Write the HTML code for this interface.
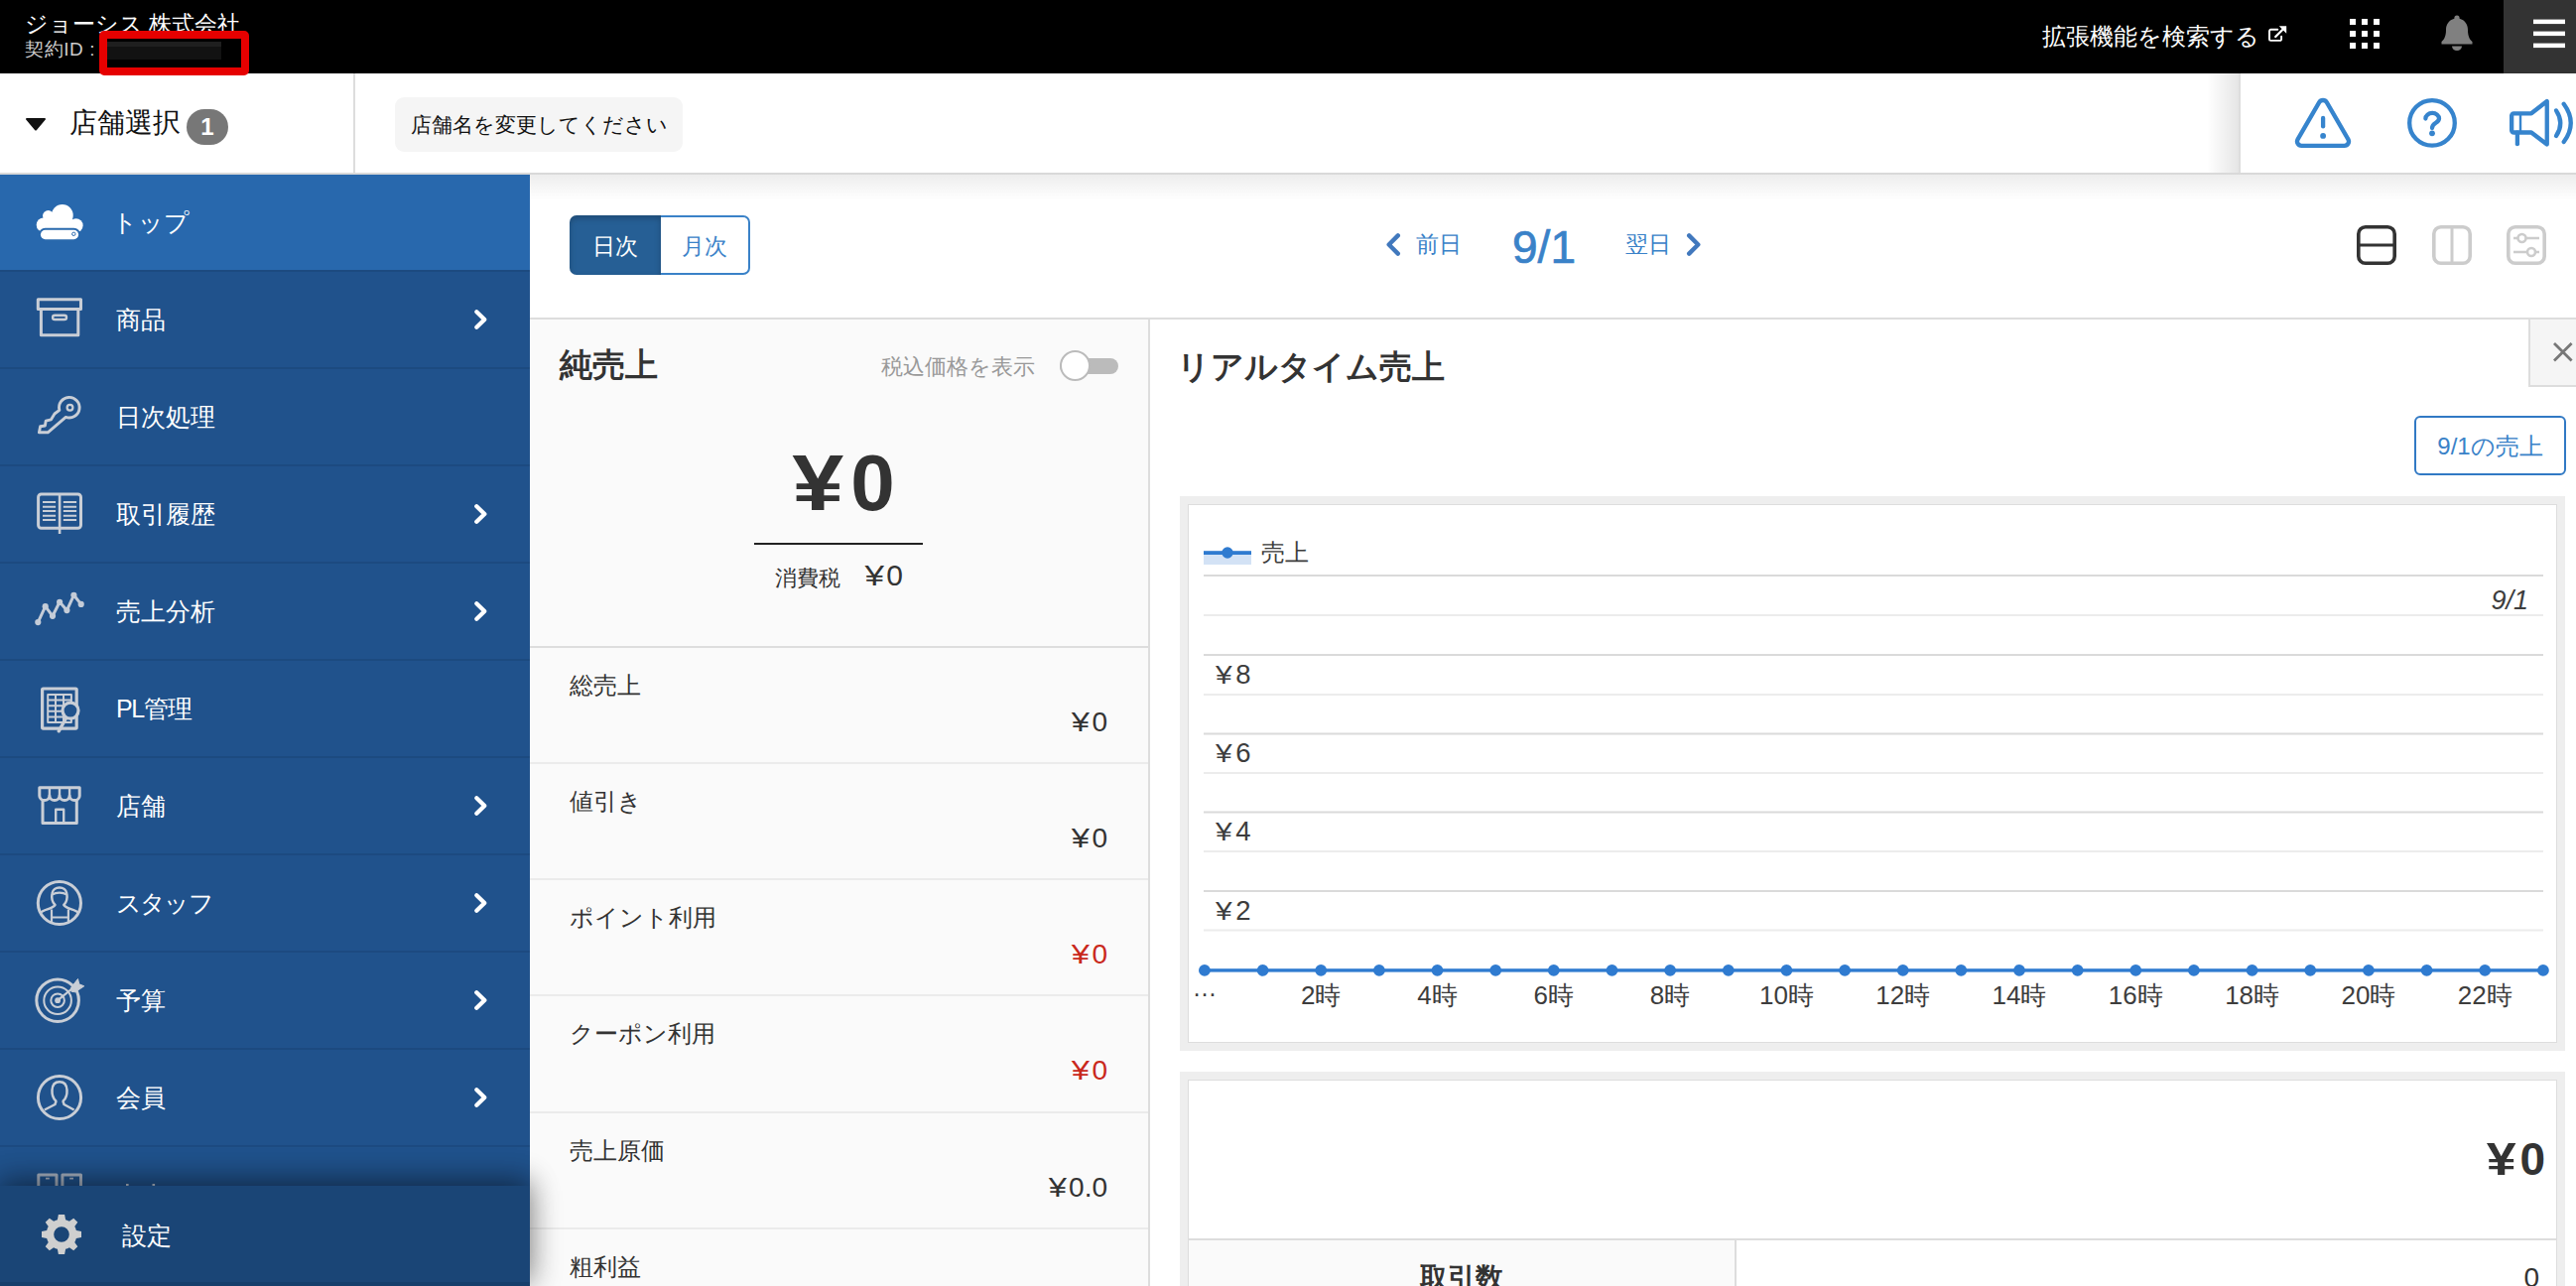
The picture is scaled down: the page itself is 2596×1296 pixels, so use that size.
<!DOCTYPE html>
<html lang="ja">
<head>
<meta charset="utf-8">
<title>トップ</title>
<style>
*{box-sizing:border-box;margin:0;padding:0}
html,body{width:2596px;height:1296px;overflow:hidden;background:#fff}
body{font-family:"Liberation Sans",sans-serif;color:#333;position:relative}
.abs{position:absolute}
svg{display:block;overflow:visible}

/* ---------- top black bar ---------- */
#topbar{position:absolute;left:0;top:0;width:2596px;height:74px;background:#000;color:#fff}
#company{position:absolute;left:25px;top:9.500px;font-size:23px;line-height:28px;white-space:nowrap}
#contract{position:absolute;left:25px;top:37.500px;font-size:19px;letter-spacing:.6px;line-height:24px;color:#ccc;white-space:nowrap}
#redact{position:absolute;left:108px;top:42px;width:115px;height:18px;background:#121212;border-top:5px solid #1f1f1f}
#redbox{position:absolute;left:100px;top:31px;width:151px;height:45px;border:8px solid #e60000;border-radius:5px;z-index:30}
#extsearch{position:absolute;left:2058px;top:22px;font-size:24px;line-height:30px;white-space:nowrap}
#hamb{position:absolute;left:2523px;top:0;width:73px;height:74px;background:#333}

/* ---------- second bar ---------- */
#bar2{position:absolute;left:0;top:74px;width:2596px;height:102px;background:#fff;border-bottom:2px solid #d9d9d9}
#bar2 .vsep{position:absolute;left:356px;top:0;width:2px;height:100px;background:#ddd}
#storesel{position:absolute;left:70px;top:32px;font-size:28px;line-height:36px;color:#111;white-space:nowrap}
#badge{position:absolute;left:188px;top:36px;width:42px;height:36px;border-radius:18px;background:#777;color:#fff;font-weight:bold;font-size:24px;line-height:36px;text-align:center}
#chip{position:absolute;left:398px;top:24px;width:290px;height:55px;border-radius:9px;background:#f5f5f5;color:#111;font-size:21px;line-height:55px;text-align:center;white-space:nowrap}
#bar2r{position:absolute;left:2256px;top:0;width:338px;height:100px;background:#fff;border-left:2px solid #ddd}
#bar2shadow{position:absolute;left:2224px;top:0;width:32px;height:100px;background:linear-gradient(to right,rgba(0,0,0,0),rgba(0,0,0,.10))}

/* ---------- sidebar ---------- */
#side{position:absolute;left:0;top:176px;width:534px;height:1120px;background:#20528c;overflow:hidden}
.item{position:absolute;left:0;width:534px;height:98px;border-bottom:2px solid #1c4a80;color:#fff;font-size:25px}
.item.on{background:#2868ad;border-bottom-color:#1c4a80}
.item .lbl{position:absolute;left:117px;top:30px;line-height:36px;white-space:nowrap}
.item .ico{position:absolute;left:34px;top:22px;width:52px;height:52px}
.item .chev{position:absolute;left:477.500px;top:38px;width:13px;height:20px}
#settings{position:absolute;left:0;top:1195px;width:534px;height:101px;background:#1a4576;box-shadow:0 0 30px rgba(0,0,0,.32),0 -8px 26px rgba(0,0,0,.28);color:#fff;font-size:25px;z-index:20}
#settings .lbl{position:absolute;left:123px;top:32px;line-height:36px}
#settings .strip{position:absolute;left:0;bottom:0;width:534px;height:4.500px;background:#163e6b}

/* ---------- content ---------- */
#content{position:absolute;left:534px;top:176px;width:2062px;height:1120px;background:#fff}
#topshadow{position:absolute;left:0;top:0;width:2062px;height:26px;background:linear-gradient(to bottom,rgba(0,0,0,.07),rgba(0,0,0,0))}
#toolbar{position:absolute;left:0;top:0;width:2062px;height:146px;border-bottom:2px solid #ddd}
#seg{position:absolute;left:40px;top:41px;width:182px;height:60px;font-size:23px;text-align:center}
#seg .a{position:absolute;left:0;top:0;width:92px;height:60px;background:#265f95;color:#fff;line-height:62px;border-radius:7px 0 0 7px;box-shadow:inset 0 3px 6px rgba(0,0,0,.22)}
#seg .b{position:absolute;left:92px;top:0;width:90px;height:60px;color:#3a82c8;line-height:58px;border:2px solid #3a82c8;border-left:0;border-radius:0 7px 7px 0;background:#fff}
.blue{color:#3a82c8}
#prev{position:absolute;left:892.500px;top:54px;font-size:23px;line-height:32px;white-space:nowrap}
#next{position:absolute;left:1104px;top:54px;font-size:23px;line-height:32px;white-space:nowrap}
#date{position:absolute;left:962px;top:46.500px;width:120px;text-align:center;font-size:46px;line-height:52px;-webkit-text-stroke:.7px #3a82c8}

/* middle panel */
#mid{position:absolute;left:0;top:146px;width:625px;height:974px;background:#fafafa;border-right:2px solid #ddd}
#mid h2{position:absolute;left:30px;top:24px;font-size:33px;line-height:44px;color:#333}
#taxlbl{position:absolute;left:354px;top:33px;font-size:22px;line-height:30px;color:#999;white-space:nowrap}
#toggle{position:absolute;left:534px;top:39px;width:59px;height:16px;border-radius:8px;background:#bbb}
#toggle i{position:absolute;left:0;top:-8px;width:31px;height:31px;border-radius:50%;background:#fff;border:2px solid #bbb}
#big{position:absolute;left:5px;top:120px;width:623px;text-align:center;font-size:80px;line-height:90px;font-weight:bold;color:#333}
#uline{position:absolute;left:226px;top:224.500px;width:170px;height:2.500px;background:#222}
#tax{position:absolute;left:247px;top:245px;font-size:22px;line-height:32px;color:#333;white-space:nowrap}
#taxv{position:absolute;left:337.500px;top:240px;font-size:30px;line-height:36px;color:#333;white-space:nowrap}
.row{position:absolute;left:0;width:623px;height:117px;border-top:2px solid #ebebeb}
.row.first{border-top-color:#ddd}
.row .k{position:absolute;left:40px;top:22px;font-size:24px;line-height:32px;white-space:nowrap}
.row .v{position:absolute;right:41px;top:57px;font-size:28px;line-height:36px;white-space:nowrap}
.red{color:#c9281c}
.yen{display:inline-block;transform:scaleX(1.17);margin:0 .13em 0 .04em}

/* right panel */
#right{position:absolute;left:625px;top:146px;width:1437px;height:974px;background:#fff}
#right h2{position:absolute;left:27px;top:26px;font-size:32.500px;line-height:44px;color:#333}
#closetab{position:absolute;left:1389px;top:0;width:48px;height:68px;background:#f5f5f5;border-left:2px solid #ddd;border-bottom:2px solid #ddd}
#salesbtn{position:absolute;left:1274px;top:97px;width:153px;height:60px;border:2px solid #3179c4;border-radius:6px;color:#3a82c8;font-size:24px;line-height:57px;text-align:center;white-space:nowrap}
.frame{position:absolute;left:30px;width:1396px;border:8px solid #eee;background:#fff}
.frame>.in{position:absolute;left:0;top:0;right:0;bottom:0;border:1px solid #ddd}

#sumtotal{position:absolute;right:12px;top:54px;font-size:46px;line-height:52px;font-weight:bold;color:#333}
#sumrow{position:absolute;left:1px;right:1px;top:159.500px;height:240px;border-top:2px solid #ddd}
#sumrow .l{position:absolute;left:0;top:0;width:552px;height:240px;background:#fafafa;border-right:2px solid #ddd;text-align:center;font-weight:bold;font-size:28px;line-height:36px;padding-top:20px;color:#333}
#sumrow .r{position:absolute;right:17px;top:20px;font-size:28px;line-height:36px;color:#333}
</style>
</head>
<body>

<!-- ================= TOP BAR ================= -->
<div id="topbar">
  <div id="company">ジョーシス 株式会社</div>
  <div id="contract">契約ID :</div>
  <div id="redact"></div>
  <div id="redbox"></div>
  <div id="extsearch">拡張機能を検索する</div>
  <svg class="abs" style="left:2284px;top:24px" width="22" height="20" viewBox="0 0 22 20"><g fill="none" stroke="#fff" stroke-width="1.900" stroke-linejoin="round" stroke-linecap="round"><path d="M11.300 5.800 H4.500 a1.500 1.500 0 0 0 -1.500 1.500 V15.400 a1.500 1.500 0 0 0 1.500 1.500 H13.600 a1.500 1.500 0 0 0 1.500 -1.500 V12.700"/><path d="M9.200 13 L17 5.200" stroke-width="2.300"/></g><path d="M12.800 2.300 H20.200 V9.700 Z" fill="#fff"/></svg>
  <svg class="abs" style="left:2368px;top:19px" width="30" height="30" viewBox="0 0 30 30"><g fill="#fff"><rect x="0" y="0" width="6" height="6"/><rect x="12" y="0" width="6" height="6"/><rect x="24" y="0" width="6" height="6"/><rect x="0" y="12" width="6" height="6"/><rect x="12" y="12" width="6" height="6"/><rect x="24" y="12" width="6" height="6"/><rect x="0" y="24" width="6" height="6"/><rect x="12" y="24" width="6" height="6"/><rect x="24" y="24" width="6" height="6"/></g></svg>
  <svg class="abs" style="left:2460px;top:15px" width="32" height="36" viewBox="0 0 32 36"><g fill="#808080"><path d="M16 0.500 a2.600 2.600 0 0 1 2.600 2.600 v0.700 C24 5.200 27 9.800 27 15 c0 6 1.500 9.500 4.500 12 v2.500 H0.500 V27 C3.500 24.500 5 21 5 15 C5 9.800 8 5.200 13.400 3.800 v-0.700 A2.600 2.600 0 0 1 16 0.500 Z"/><path d="M11 31.500 H21 a5 4.500 0 0 1 -10 0 Z"/></g></svg>
  <div id="hamb"><svg class="abs" style="left:30px;top:19px" width="32" height="30" viewBox="0 0 32 30"><g fill="#fff"><rect x="0" y="0.600" width="32" height="4.500"/><rect x="0" y="12.600" width="32" height="4.500"/><rect x="0" y="24.600" width="32" height="4.500"/></g></svg></div>
</div>

<!-- ================= SECOND BAR ================= -->
<div id="bar2">
  <div class="vsep"></div>
  <svg class="abs" style="left:25px;top:44px" width="22" height="14" viewBox="0 0 22 14"><path d="M2 1 H20 a1 1 0 0 1 .8 1.600 L12 13 a1.300 1.300 0 0 1 -2 0 L1.200 2.600 A1 1 0 0 1 2 1 Z" fill="#111"/></svg>
  <div id="storesel">店舗選択</div>
  <div id="badge">1</div>
  <div id="chip">店舗名を変更してください</div>
  <div id="bar2shadow"></div>
  <div id="bar2r">
    <svg class="abs" style="left:52px;top:22px" width="62" height="56" viewBox="0 0 62 56"><g fill="none" stroke="#3684cd" stroke-width="4.300" stroke-linejoin="round" stroke-linecap="round"><path d="M27.200 7.200 a4.400 4.400 0 0 1 7.600 0 L56.400 44.300 a4.400 4.400 0 0 1 -3.800 6.600 H9.400 a4.400 4.400 0 0 1 -3.800 -6.600 Z"/><path d="M31.100 22.900 V31.400"/></g><circle cx="31.100" cy="40.900" r="2.900" fill="#3684cd"/></svg>
    <svg class="abs" style="left:166px;top:23px" width="54" height="54" viewBox="0 0 54 54"><circle cx="27" cy="26.900" r="22.800" fill="none" stroke="#3684cd" stroke-width="4.300"/><path d="M20.400 22.500 A6.800 5.600 0 0 1 34 22.500 C34 27 27 26.500 27 32" fill="none" stroke="#3684cd" stroke-width="4.300" stroke-linecap="round"/><circle cx="27" cy="37.300" r="2.900" fill="#3684cd"/></svg>
    <svg class="abs" style="left:268px;top:22px" width="70" height="56" viewBox="0 0 70 56"><g fill="none" stroke="#3684cd" stroke-width="4.300" stroke-linejoin="round" stroke-linecap="round"><path d="M5.150 20.500 a2.200 2.200 0 0 1 2.200 -2.200 H25 L40.750 6 V49.500 L25 37.500 H7.350 a2.200 2.200 0 0 1 -2.200 -2.200 Z"/><path d="M14 18.300 V37.500" stroke-width="2.400"/><path d="M10.900 37.600 V49.200"/><path d="M50 15.400 Q58.600 28.200 50 41"/><path d="M57.700 8.800 Q71.800 27.900 57.700 47"/></g></svg>
  </div>
</div>

<!-- ================= SIDEBAR ================= -->
<div id="side">
<!--SIDE-START-->
  <svg width="0" height="0" style="position:absolute"><defs>
    <path id="chv" d="M2.300 2.300 L10.300 10 L2.300 17.700" fill="none" stroke="#fff" stroke-width="4.300" stroke-linecap="round" stroke-linejoin="round"/>
  </defs></svg>
  <div class="item on" style="top:0px">
    <svg class="ico" viewBox="0 0 52 52"><g fill="#fff">
      <circle cx="28.800" cy="18.900" r="10.900"/><circle cx="14.600" cy="19.600" r="5.600"/><circle cx="9.900" cy="28.700" r="7.200"/><circle cx="42.600" cy="29.200" r="7"/>
      <rect x="9.900" y="24" width="32.700" height="12"/><rect x="14" y="19" width="25" height="10"/>
      <rect x="4.900" y="31.800" width="42.200" height="13.400" rx="6.700" fill="#2868ad"/>
      <rect x="6.900" y="33.800" width="38.200" height="9.400" rx="4.700"/>
      <circle cx="40.300" cy="37.800" r="1.700" fill="none" stroke="#2868ad" stroke-width="1"/>
    </g></svg>
    <div class="lbl" style="left:112.500px">トップ</div>
  </div>
  <div class="item" style="top:98px">
    <svg class="ico" viewBox="0 0 52 52"><g fill="none" stroke="#c9ced6" stroke-width="3" stroke-linejoin="round">
      <rect x="4.300" y="5.800" width="43.200" height="9.600"/>
      <path d="M7.400 15.400 V41.700 H44.800 V15.400"/>
      <rect x="19.100" y="21.800" width="13.900" height="4.200" rx="2.100" stroke-width="2.400"/>
    </g></svg>
    <div class="lbl">商品</div>
    <svg class="chev" viewBox="0 0 13 20"><use href="#chv"/></svg>
  </div>
  <div class="item" style="top:196px">
    <svg class="ico" viewBox="0 0 52 52"><g fill="none" stroke="#c9ced6" stroke-width="2.900" stroke-linejoin="round">
      <path d="M25.850 19.400 L21 23 L17.500 28.800 L12.200 30.200 L11.400 35 L6.600 35.800 L5.400 41.800 L14.200 41.800 L32.300 26.400 A10.300 10.300 0 1 0 25.850 19.400 Z"/>
      <circle cx="36.500" cy="16.700" r="2.900" stroke-width="2.200"/>
    </g></svg>
    <div class="lbl">日次処理</div>
  </div>
  <div class="item" style="top:294px">
    <svg class="ico" viewBox="0 0 52 52"><g fill="none" stroke="#c9ced6" stroke-width="3" stroke-linejoin="round">
      <rect x="4.600" y="5.900" width="42.900" height="34.400" rx="3"/>
      <path d="M26.100 5.900 V46" stroke-width="2.600"/>
      <path d="M9 14.1H22.100M29.800 14.1H43.100M9 18.7H22.100M29.800 18.7H43.100M9 23.1H22.100M29.800 23.1H43.100M9 27.8H22.100M29.800 27.8H43.100M9 32.1H22.100M29.800 32.1H43.100" stroke-width="2"/>
    </g></svg>
    <div class="lbl">取引履歴</div>
    <svg class="chev" viewBox="0 0 13 20"><use href="#chv"/></svg>
  </div>
  <div class="item" style="top:392px">
    <svg class="ico" viewBox="0 0 52 52"><g fill="none" stroke="#c4ccd8" stroke-width="3" stroke-linejoin="round" stroke-linecap="round">
      <path d="M4.3 37.1 L11.7 21.2 L19 30.8 L26.1 16.8 L33.4 25.1 L40.4 9.8 L47.7 18.9"/><g fill="#c4ccd8" stroke="none"><circle cx="4.3" cy="37.1" r="3.100"/><circle cx="11.7" cy="21.2" r="3.100"/><circle cx="19" cy="30.8" r="3.100"/><circle cx="26.1" cy="16.8" r="3.100"/><circle cx="33.4" cy="25.1" r="3.100"/><circle cx="40.4" cy="9.8" r="3.100"/><circle cx="47.7" cy="18.9" r="3.100"/></g>
    </g></svg>
    <div class="lbl">売上分析</div>
    <svg class="chev" viewBox="0 0 13 20"><use href="#chv"/></svg>
  </div>
  <div class="item" style="top:490px">
    <svg class="ico" viewBox="0 0 52 52"><g fill="none" stroke="#c9ced6" stroke-width="3.200" stroke-linejoin="round">
      <rect x="8.600" y="6" width="34.600" height="40.100" rx="1"/>
      <g stroke-width="2"><rect x="14.200" y="12" width="23.700" height="28"/><path d="M14.200 17.600H38M14.200 23.200H38M14.200 28.800H38M14.200 34.400H38M22 12V40M30 12V40"/></g>
      <circle cx="37" cy="28.100" r="8" fill="#20528c"/>
      <path d="M32.200 36.500 L25.200 48.800" stroke-linecap="round" stroke-width="3.400"/>
    </g></svg>
    <div class="lbl" style="letter-spacing:-1.300px">PL管理</div>
  </div>
  <div class="item" style="top:588px">
    <svg class="ico" viewBox="0 0 52 52"><g fill="none" stroke="#c9ced6" stroke-width="3" stroke-linejoin="round">
      <path d="M5.800 7.800 H46.200 V16 A5.050 4.600 0 0 1 36.100 16 A5.050 4.600 0 0 1 26 16 A5.050 4.600 0 0 1 15.900 16 A5.050 4.600 0 0 1 5.800 16 Z"/>
      <path d="M15.900 7.800V16M26 7.800V16M36.100 7.800V16" stroke-width="2.400"/>
      <path d="M9 20.500 V43.600 H43.300 V20.500"/>
      <path d="M22.200 43 V29.700 H30.200 V43" stroke-width="2.400"/>
    </g></svg>
    <div class="lbl">店舗</div>
    <svg class="chev" viewBox="0 0 13 20"><use href="#chv"/></svg>
  </div>
  <div class="item" style="top:686px">
    <svg class="ico" viewBox="0 0 52 52"><g fill="none" stroke="#c9ced6" stroke-width="3" stroke-linejoin="round">
      <circle cx="25.900" cy="26" r="21.600"/>
      <path d="M6.500 36 C10 32 18.500 32.500 21.500 28 C19 25.500 17.500 22 18.500 16.500 C19.500 8.500 32.300 8.500 33.300 16.500 C34.300 22 32.800 25.500 30.300 28 C33.300 32.500 41.800 32 45.300 36" stroke-width="2.500"/>
      <path d="M19 17.500 C22 15 29.800 15 32.800 17.500" stroke-width="2.200"/>
      <path d="M18 32.500 V45 M34.900 32.500 V45 M18 40.500 H34.900" stroke-width="2.200"/>
    </g></svg>
    <div class="lbl" style="letter-spacing:-1.800px">スタッフ</div>
    <svg class="chev" viewBox="0 0 13 20"><use href="#chv"/></svg>
  </div>
  <div class="item" style="top:784px">
    <svg class="ico" viewBox="0 0 52 52"><g fill="none" stroke="#c9ced6" stroke-width="3" stroke-linecap="round">
      <circle cx="24.100" cy="26.200" r="21.300"/>
      <circle cx="24.100" cy="26.200" r="13.800" stroke-width="2"/>
      <circle cx="24.100" cy="26.200" r="6.800" stroke-width="2"/>
      <circle cx="24.100" cy="26.200" r="2.900" fill="#c9ced6" stroke="none"/>
      <path d="M24.100 26.200 L41 12.500" stroke-width="2.200"/>
      <path d="M37.500 13.500 L44.500 4.500 L45.800 9.800 L50.800 11.800 L41.800 17.800 L38.300 17.300 Z" fill="#c9ced6" stroke="#c9ced6" stroke-width="1" stroke-linejoin="round"/>
    </g></svg>
    <div class="lbl">予算</div>
    <svg class="chev" viewBox="0 0 13 20"><use href="#chv"/></svg>
  </div>
  <div class="item" style="top:882px">
    <svg class="ico" viewBox="0 0 52 52"><g fill="none" stroke="#c9ced6" stroke-width="3" stroke-linejoin="round">
      <circle cx="26" cy="26" r="21.600"/>
      <path d="M10.800 38.500 L21.500 33 C21.500 31.500 22.800 31 22.300 29.500 C19.500 27 18.300 22 18.500 18.500 C18.800 13 21.500 10.200 26 10.200 C30.500 10.200 33.200 13 33.500 18.500 C33.700 22 32.500 27 29.700 29.500 C29.200 31 30.500 31.500 30.500 33 L40.600 38.500" stroke-width="2.500"/>
    </g></svg>
    <div class="lbl">会員</div>
    <svg class="chev" viewBox="0 0 13 20"><use href="#chv"/></svg>
  </div>
  <div class="item" style="top:980px;border-bottom:0">
    <svg class="ico" viewBox="0 0 52 52"><g fill="none" stroke="#a9b3c3" stroke-width="3" stroke-linejoin="round">
      <rect x="4.800" y="6.100" width="18.200" height="30"/><rect x="28.900" y="6.100" width="18.600" height="30"/>
      <path d="M12 9.600H15.800M36.200 9.600H40" stroke-width="1.600"/>
    </g></svg>
    <svg class="abs" style="left:120px;top:34px" width="50" height="6" viewBox="0 0 50 6"><g fill="#b9c2d0"><rect x="7" y="3" width="2.600" height="3"/><rect x="33.500" y="3" width="2.600" height="3"/></g></svg>
  </div>
<!--SIDE-END-->
</div>
<div id="settings">
  <svg class="abs" style="left:42px;top:29px" width="40" height="40" viewBox="0 0 41 41"><path fill="#cfcfcf" fill-rule="evenodd" d="M17.300 0 H23.700 L24.700 5.300 A15.800 15.800 0 0 1 28.600 6.900 L33 3.800 L37.200 8 L34.100 12.400 A15.800 15.800 0 0 1 35.700 16.300 L41 17.300 V23.700 L35.700 24.700 A15.800 15.800 0 0 1 34.100 28.600 L37.200 33 L33 37.200 L28.600 34.100 A15.800 15.800 0 0 1 24.700 35.700 L23.700 41 H17.300 L16.300 35.700 A15.800 15.800 0 0 1 12.400 34.100 L8 37.200 L3.800 33 L6.900 28.600 A15.800 15.800 0 0 1 5.300 24.700 L0 23.700 V17.300 L5.300 16.300 A15.800 15.800 0 0 1 6.900 12.400 L3.800 8 L8 3.800 L12.400 6.900 A15.800 15.800 0 0 1 16.300 5.300 Z M20.500 12.500 A8 8 0 1 0 20.500 28.500 A8 8 0 1 0 20.500 12.500 Z"/></svg>
  <div class="lbl">設定</div>
  <div class="strip"></div>
</div>

<!-- ================= CONTENT ================= -->
<div id="content">
  <div id="toolbar">
    <div id="seg"><div class="a">日次</div><div class="b">月次</div></div>
    <svg class="abs" style="left:862px;top:59px" width="16" height="23" viewBox="0 0 16 24"><path d="M13 2.500 L3.500 12 L13 21.500" fill="none" stroke="#4178bd" stroke-width="4.600" stroke-linecap="round" stroke-linejoin="round"/></svg>
    <div id="prev" class="blue">前日</div>
    <div id="date" class="blue">9/1</div>
    <div id="next" class="blue">翌日</div>
    <svg class="abs" style="left:1165px;top:59px" width="16" height="23" viewBox="0 0 16 24"><path d="M3 2.500 L12.500 12 L3 21.500" fill="none" stroke="#4178bd" stroke-width="4.600" stroke-linecap="round" stroke-linejoin="round"/></svg>
    <svg class="abs" style="left:1841px;top:51px" width="40" height="40" viewBox="0 0 40 40"><g fill="none" stroke="#333" stroke-width="3.600"><rect x="1.800" y="1.800" width="36.400" height="36.400" rx="7"/><path d="M2 20 H38" stroke-width="3"/></g></svg>
    <svg class="abs" style="left:1917px;top:51px" width="40" height="40" viewBox="0 0 40 40"><g fill="none" stroke="#ccc" stroke-width="3.600"><rect x="1.800" y="1.800" width="36.400" height="36.400" rx="7"/><path d="M20 2 V38" stroke-width="3"/></g></svg>
    <svg class="abs" style="left:1992px;top:51px" width="40" height="40" viewBox="0 0 40 40"><g fill="none" stroke="#ccc" stroke-width="3.600"><rect x="1.800" y="1.800" width="36.400" height="36.400" rx="7"/><g stroke-width="2.600"><path d="M7 13 H11.500 M19.500 13 H33"/><circle cx="15.500" cy="13" r="4"/><path d="M7 27 H21 M29 27 H33"/><circle cx="25" cy="27" r="4"/></g></g></svg>
  </div>
  <div id="topshadow"></div>

  <div id="mid">
    <h2>純売上</h2>
    <div id="taxlbl">税込価格を表示</div>
    <div id="toggle"><i></i></div>
    <div id="big"><span class="yen">¥</span>0</div>
    <div id="uline"></div>
    <div id="tax">消費税</div><div id="taxv"><span class="yen">¥</span>0</div>
    <div class="row first" style="top:329.00px"><div class="k">総売上</div><div class="v "><span class="yen">¥</span>0</div></div>
    <div class="row" style="top:446.15px"><div class="k">値引き</div><div class="v "><span class="yen">¥</span>0</div></div>
    <div class="row" style="top:563.30px"><div class="k">ポイント利用</div><div class="v red"><span class="yen">¥</span>0</div></div>
    <div class="row" style="top:680.45px"><div class="k">クーポン利用</div><div class="v red"><span class="yen">¥</span>0</div></div>
    <div class="row" style="top:797.60px"><div class="k">売上原価</div><div class="v "><span class="yen">¥</span>0.0</div></div>
    <div class="row" style="top:914.75px"><div class="k">粗利益</div><div class="v "><span class="yen">¥</span>0</div></div>
  </div>

  <div id="right">
    <h2>リアルタイム売上</h2>
    <div id="closetab"><svg class="abs" style="left:23.300px;top:23.100px" width="19.600" height="19.600" viewBox="0 0 19.600 19.600"><path d="M1 1 L18.600 18.600 M18.600 1 L1 18.600" stroke="#777" stroke-width="2.800" fill="none"/></svg></div>
    <div id="salesbtn">9/1の売上</div>
    <div class="frame" id="chartbox" style="top:178px;height:559px"><div class="in"></div>
    <svg class="abs" style="left:-8px;top:-8px" width="1396" height="559" viewBox="1189 500 1396 559" font-family="'Liberation Sans',sans-serif">
    <rect x="1213" y="579" width="1350" height="2" fill="#dadada"/>
    <rect x="1213" y="619" width="1350" height="2" fill="#ececec"/>
    <rect x="1213" y="659" width="1350" height="2" fill="#dadada"/>
    <rect x="1213" y="699" width="1350" height="2" fill="#ececec"/>
    <rect x="1213" y="738.5" width="1350" height="2" fill="#dadada"/>
    <rect x="1213" y="778" width="1350" height="2" fill="#ececec"/>
    <rect x="1213" y="817.5" width="1350" height="2" fill="#dadada"/>
    <rect x="1213" y="857" width="1350" height="2" fill="#ececec"/>
    <rect x="1213" y="897" width="1350" height="2" fill="#dadada"/>
    <rect x="1213" y="936.5" width="1350" height="2" fill="#ececec"/>
    <rect x="1213" y="557" width="48" height="12" fill="#d3e2f5"/>
    <rect x="1213" y="555.200" width="48" height="3.800" fill="#2f7bd0"/><circle cx="1237" cy="557" r="5.700" fill="#2f7bd0"/>
    <text x="1271" y="565" font-size="24" fill="#3d3d3d">売上</text>
    <text x="2548" y="614" font-size="27" fill="#3d3d3d" text-anchor="end" font-style="italic">9/1</text>
    <text transform="translate(1225 688.6) scale(1.13 1)" font-size="26.500" fill="#3d3d3d">¥</text><text x="1245.200" y="688.6" font-size="27.500" fill="#3d3d3d">8</text>
    <text transform="translate(1225 768.2) scale(1.13 1)" font-size="26.500" fill="#3d3d3d">¥</text><text x="1245.200" y="768.2" font-size="27.500" fill="#3d3d3d">6</text>
    <text transform="translate(1225 847.4) scale(1.13 1)" font-size="26.500" fill="#3d3d3d">¥</text><text x="1245.200" y="847.4" font-size="27.500" fill="#3d3d3d">4</text>
    <text transform="translate(1225 927.2) scale(1.13 1)" font-size="26.500" fill="#3d3d3d">¥</text><text x="1245.200" y="927.2" font-size="27.500" fill="#3d3d3d">2</text>
    <rect x="1213.9" y="976.200" width="1348.95" height="3.400" fill="#2f7bd0"/>
    <circle cx="1213.9" cy="977.900" r="5.900" fill="#2f7bd0"/>
    <circle cx="1272.6" cy="977.900" r="5.900" fill="#2f7bd0"/>
    <circle cx="1331.2" cy="977.900" r="5.900" fill="#2f7bd0"/>
    <circle cx="1389.9" cy="977.900" r="5.900" fill="#2f7bd0"/>
    <circle cx="1448.5" cy="977.900" r="5.900" fill="#2f7bd0"/>
    <circle cx="1507.2" cy="977.900" r="5.900" fill="#2f7bd0"/>
    <circle cx="1565.8" cy="977.900" r="5.900" fill="#2f7bd0"/>
    <circle cx="1624.5" cy="977.900" r="5.900" fill="#2f7bd0"/>
    <circle cx="1683.1" cy="977.900" r="5.900" fill="#2f7bd0"/>
    <circle cx="1741.8" cy="977.900" r="5.900" fill="#2f7bd0"/>
    <circle cx="1800.4" cy="977.900" r="5.900" fill="#2f7bd0"/>
    <circle cx="1859.1" cy="977.900" r="5.900" fill="#2f7bd0"/>
    <circle cx="1917.7" cy="977.900" r="5.900" fill="#2f7bd0"/>
    <circle cx="1976.3" cy="977.900" r="5.900" fill="#2f7bd0"/>
    <circle cx="2035.0" cy="977.900" r="5.900" fill="#2f7bd0"/>
    <circle cx="2093.7" cy="977.900" r="5.900" fill="#2f7bd0"/>
    <circle cx="2152.3" cy="977.900" r="5.900" fill="#2f7bd0"/>
    <circle cx="2210.9" cy="977.900" r="5.900" fill="#2f7bd0"/>
    <circle cx="2269.6" cy="977.900" r="5.900" fill="#2f7bd0"/>
    <circle cx="2328.2" cy="977.900" r="5.900" fill="#2f7bd0"/>
    <circle cx="2386.9" cy="977.900" r="5.900" fill="#2f7bd0"/>
    <circle cx="2445.6" cy="977.900" r="5.900" fill="#2f7bd0"/>
    <circle cx="2504.2" cy="977.900" r="5.900" fill="#2f7bd0"/>
    <circle cx="2562.9" cy="977.900" r="5.900" fill="#2f7bd0"/>
    <text x="1201.400" y="1003.900" font-size="25" fill="#3d3d3d">…</text>
    <text x="1331.2" y="1011.500" font-size="26" fill="#3d3d3d" text-anchor="middle">2時</text>
    <text x="1448.5" y="1011.500" font-size="26" fill="#3d3d3d" text-anchor="middle">4時</text>
    <text x="1565.8" y="1011.500" font-size="26" fill="#3d3d3d" text-anchor="middle">6時</text>
    <text x="1683.1" y="1011.500" font-size="26" fill="#3d3d3d" text-anchor="middle">8時</text>
    <text x="1800.4" y="1011.500" font-size="26" fill="#3d3d3d" text-anchor="middle">10時</text>
    <text x="1917.7" y="1011.500" font-size="26" fill="#3d3d3d" text-anchor="middle">12時</text>
    <text x="2035.0" y="1011.500" font-size="26" fill="#3d3d3d" text-anchor="middle">14時</text>
    <text x="2152.3" y="1011.500" font-size="26" fill="#3d3d3d" text-anchor="middle">16時</text>
    <text x="2269.6" y="1011.500" font-size="26" fill="#3d3d3d" text-anchor="middle">18時</text>
    <text x="2386.9" y="1011.500" font-size="26" fill="#3d3d3d" text-anchor="middle">20時</text>
    <text x="2504.2" y="1011.500" font-size="26" fill="#3d3d3d" text-anchor="middle">22時</text>
    </svg></div>
    <div class="frame" id="sumbox" style="top:758px;height:400px"><div class="in"></div>
    <div id="sumtotal"><span class="yen">¥</span>0</div>
    <div id="sumrow"><div class="l">取引数</div><div class="r">0</div></div>
    </div>
  </div>
</div>

</body>
</html>
